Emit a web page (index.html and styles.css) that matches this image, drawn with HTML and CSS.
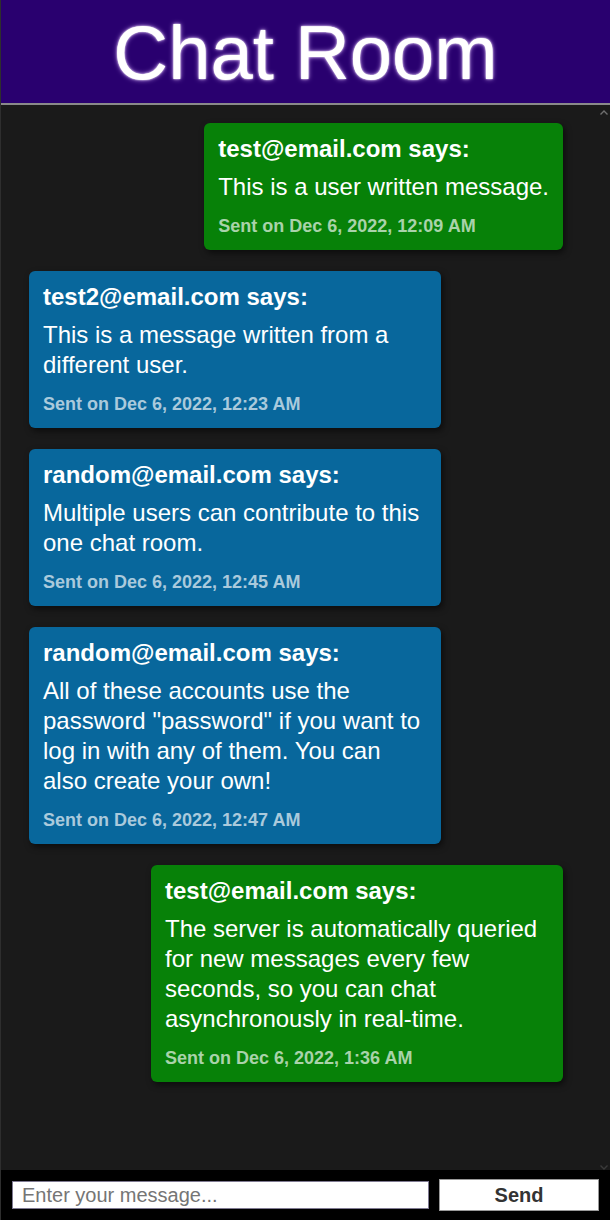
FILE: index.html
```html
<!DOCTYPE html>
<html lang="en">
<head>
<meta charset="utf-8">
<title>Chat Room</title>
<link rel="stylesheet" href="styles.css">
</head>
<body>
<div class="app">
  <header class="header">
    <h1 class="title">Chat Room</h1>
  </header>
  <main class="chat">
    <div class="messages">
      <div class="msg own">
        <div class="author">test@email.com says:</div>
        <div class="text">This is a user written message.</div>
        <div class="time">Sent on Dec 6, 2022, 12:09 AM</div>
      </div>
      <div class="msg other">
        <div class="author">test2@email.com says:</div>
        <div class="text">This is a message written from a different user.</div>
        <div class="time">Sent on Dec 6, 2022, 12:23 AM</div>
      </div>
      <div class="msg other">
        <div class="author">random@email.com says:</div>
        <div class="text">Multiple users can contribute to this one chat room.</div>
        <div class="time">Sent on Dec 6, 2022, 12:45 AM</div>
      </div>
      <div class="msg other">
        <div class="author">random@email.com says:</div>
        <div class="text">All of these accounts use the password "password" if you want to log in with any of them. You can also create your own!</div>
        <div class="time">Sent on Dec 6, 2022, 12:47 AM</div>
      </div>
      <div class="msg own">
        <div class="author">test@email.com says:</div>
        <div class="text">The server is automatically queried for new messages every few seconds, so you can chat asynchronously in real-time.</div>
        <div class="time">Sent on Dec 6, 2022, 1:36 AM</div>
      </div>
    </div>
    <div class="rail">
      <svg class="arrow" width="8" height="5" viewBox="0 0 8 5"><path d="M0.5 4.5 L4 1 L7.5 4.5" fill="none" stroke="#6e6e6e" stroke-width="1.4"/></svg>
      <svg class="arrow" width="8" height="5" viewBox="0 0 8 5"><path d="M0.5 0.5 L4 4 L7.5 0.5" fill="none" stroke="#3a3a3a" stroke-width="1.4"/></svg>
    </div>
  </main>
  <form class="composer">
    <input class="input" type="text" placeholder="Enter your message...">
    <button class="send" type="button">Send</button>
  </form>
</div>
</body>
</html>
```

FILE: styles.css
```css
* { box-sizing: border-box; }

html, body {
  margin: 0;
  padding: 0;
  background: #1a1a1a;
  font-family: "Liberation Sans", Arial, sans-serif;
}

.app {
  height: 1220px;
  display: flex;
  flex-direction: column;
  border-left: 1px solid #2e2e2e;
}

.header {
  height: 105px;
  background: #29006f;
  border-bottom: 2px solid #8a8a8a;
  display: flex;
  align-items: center;
  justify-content: center;
}

.title {
  margin: 0;
  color: #fff;
  font-weight: normal;
  font-size: 76px;
  line-height: 1;
  padding-top: 2px;
  text-shadow: 0 0 2px #fff, 0 0 5px rgba(214, 170, 255, 0.9);
}

.chat {
  flex: 1;
  display: flex;
  background: #1a1a1a;
  min-height: 0;
}

.messages {
  flex: 1;
  display: flex;
  flex-direction: column;
  gap: 21px;
  padding: 18px 35px 0 28px;
}

.rail {
  width: 12px;
  display: flex;
  flex-direction: column;
  justify-content: space-between;
  align-items: center;
  padding: 5px 0 0;
}

.arrow { display: block; }

.msg {
  max-width: 412px;
  padding: 12px 14px 13px;
  border-radius: 6px;
  color: #fff;
  box-shadow: 2px 3px 6px rgba(0, 0, 0, 0.55);
}

.own {
  align-self: flex-end;
  background: #078108;
}

.other {
  align-self: flex-start;
  background: #08679c;
}

.author {
  font-weight: bold;
  font-size: 24px;
  line-height: 28px;
  margin-bottom: 9px;
}

.text {
  font-size: 24px;
  line-height: 30px;
  margin-bottom: 13px;
}

.time {
  font-weight: bold;
  font-size: 18px;
  line-height: 22px;
  color: rgba(255, 255, 255, 0.66);
}

.composer {
  height: 50px;
  margin: 0;
  background: #000;
  display: grid;
  grid-template-columns: 1fr 160px;
  gap: 10px;
  align-items: center;
  padding: 0 11px 0 11px;
}

.input {
  height: 28px;
  margin: 0;
  padding: 0 9px;
  border: 1px solid #7f7a92;
  background: #fff;
  font-family: "Liberation Sans", Arial, sans-serif;
  font-size: 20px;
  color: #222;
  outline: none;
  border-radius: 0;
}

.input::placeholder { color: #757575; }

.send {
  height: 32px;
  margin: 0;
  border: 1px solid #999;
  background: #fff;
  font-family: "Liberation Sans", Arial, sans-serif;
  font-weight: bold;
  font-size: 20px;
  color: #333;
  border-radius: 0;
}
```
